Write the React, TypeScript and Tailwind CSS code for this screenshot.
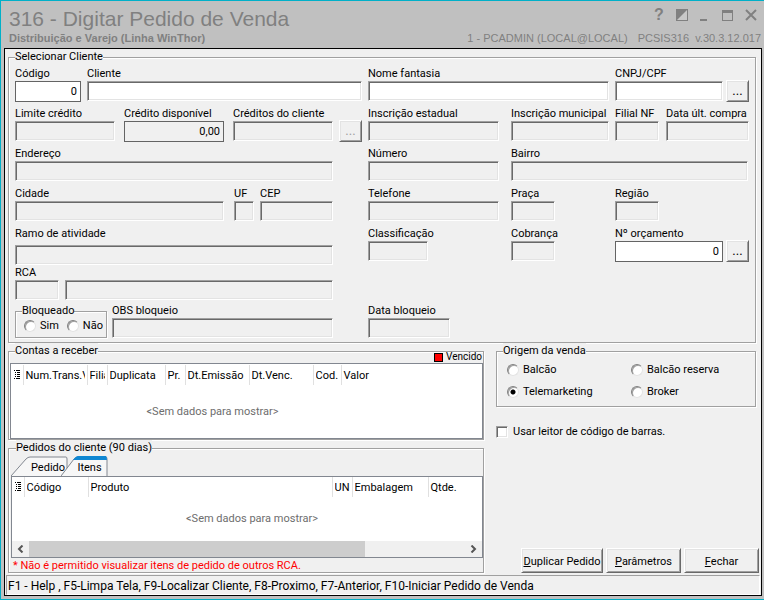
import { useState, type ReactNode } from 'react'

const SUNKEN =
  'border border-t-[#a0a0a0] border-l-[#a0a0a0] border-r-white border-b-white shadow-[inset_1px_1px_0_#696969,inset_-1px_-1px_0_#e3e3e3]'
const RAISED =
  'border border-t-white border-l-white border-r-[#696969] border-b-[#696969] shadow-[inset_1px_1px_0_#e3e3e3,inset_-1px_-1px_0_#a0a0a0]'
const ETCHED = 'border border-[#a0a0a0] shadow-[1px_1px_0_#fff,inset_1px_1px_0_#fff]'

interface FieldProps {
  id: string
  label?: string
  ariaLabel?: string
  value?: string
  variant?: 'readonly' | 'edit' | 'flat' | 'flatReadonly'
  className?: string
  inputClassName?: string
}

function Field({ id, label, ariaLabel, value = '', variant = 'readonly', className = '', inputClassName = '' }: FieldProps) {
  const styles = {
    readonly: `h-5 bg-[#f0f0f0] ${SUNKEN}`,
    edit: `h-5 bg-white ${SUNKEN}`,
    flat: 'h-[21px] bg-white border border-[#646464]',
    flatReadonly: 'h-[21px] bg-[#f0f0f0] border border-[#646464]',
  }
  return (
    <div className={`min-w-0 ${className}`}>
      <label htmlFor={id} className="block h-[15px] leading-4 whitespace-nowrap">
        {label}
      </label>
      <input
        id={id}
        aria-label={ariaLabel}
        defaultValue={value}
        readOnly={variant === 'readonly' || variant === 'flatReadonly'}
        className={`block w-full px-[3px] text-right outline-none ${styles[variant]} ${inputClassName}`}
      />
    </div>
  )
}

function DotsButton({ label, disabled = false }: { label: string; disabled?: boolean }) {
  return (
    <button
      type="button"
      aria-label={label}
      disabled={disabled}
      className={`mt-[14px] h-[22px] w-[23px] shrink-0 bg-[#f0f0f0] text-[13px] leading-5 disabled:text-[#a0a0a0] ${RAISED}`}
    >
      ...
    </button>
  )
}

function Group({ title, className = '', legendClassName = '', children }: {
  title: string
  className?: string
  legendClassName?: string
  children: ReactNode
}) {
  return (
    <fieldset className={`min-w-0 ${ETCHED} ${className}`}>
      <legend className={`bg-[#f0f0f0] leading-4 ${legendClassName}`}>{title}</legend>
      {children}
    </fieldset>
  )
}

function Radio({ name, label, checked, onChange }: {
  name: string
  label: string
  checked: boolean
  onChange: () => void
}) {
  return (
    <label className="flex items-center gap-1 leading-[14px] whitespace-nowrap">
      <input
        type="radio"
        name={name}
        checked={checked}
        onChange={onChange}
        className="size-3 appearance-none rounded-full border border-t-[#808080] border-l-[#808080] border-r-[#e3e3e3] border-b-[#e3e3e3] bg-white shadow-[inset_1px_1px_0_#a0a0a0] checked:bg-[radial-gradient(circle,#000_2px,#fff_3px)]"
      />
      {label}
    </label>
  )
}

function RowsIcon() {
  return (
    <svg width="8" height="10" viewBox="0 0 8 10" className="mx-auto" shapeRendering="crispEdges" aria-hidden="true">
      <path d="M1 0h1v1H1zM3 0h4v1H3zM2 2h1v1H2zM4 2h3v1H4zM2 4h1v1H2zM4 4h3v1H4zM2 6h1v1H2zM4 6h3v1H4zM1 8h1v1H1zM3 8h4v1H3z" fill="#000" />
    </svg>
  )
}

interface Column {
  title: string
  width: number
}

const ACCOUNT_COLUMNS: Column[] = [
  { title: 'Num.Trans.V', width: 64 },
  { title: 'Filial', width: 20 },
  { title: 'Duplicata', width: 58 },
  { title: 'Pr.', width: 20 },
  { title: 'Dt.Emissão', width: 64 },
  { title: 'Dt.Venc.', width: 64 },
  { title: 'Cod.', width: 28 },
]

const ITEM_COLUMNS: Column[] = [
  { title: 'Código', width: 64 },
  { title: 'Produto', width: 244 },
  { title: 'UN', width: 20 },
  { title: 'Embalagem', width: 76 },
]

function DataGrid({ label, columns, last, bodyClassName }: {
  label: string
  columns: Column[]
  last: string
  bodyClassName: string
}) {
  return (
    <table aria-label={label} className="w-full table-fixed border-collapse bg-white">
      <colgroup>
        <col className="w-3" />
        {columns.map((column) => (
          <col key={column.title} style={{ width: column.width }} />
        ))}
        <col />
      </colgroup>
      <thead>
        <tr className="h-5 text-left">
          <th className="border-r border-[#e0e0e0] p-0" aria-label="Linhas">
            <RowsIcon />
          </th>
          {columns.map((column) => (
            <th key={column.title} className="border-r border-[#e0e0e0] p-0 px-[2px] font-normal">
              <div className="overflow-hidden pt-[2px] leading-[18px] whitespace-nowrap">{column.title}</div>
            </th>
          ))}
          <th className="p-0 pt-[2px] pl-[2px] leading-[18px] font-normal">{last}</th>
        </tr>
      </thead>
      <tbody>
        <tr>
          <td colSpan={columns.length + 2} className={`p-0 text-center text-[#6d6d6d] ${bodyClassName}`}>
            &lt;Sem dados para mostrar&gt;
          </td>
        </tr>
      </tbody>
    </table>
  )
}

function TitleBar() {
  return (
    <header className="flex h-[47px] shrink-0 justify-between pr-[3px] pl-2 font-['Liberation_Sans',Arial,sans-serif] text-[#808080]">
      <div>
        <h1 className="mt-[6px] text-[21px] leading-6">316 - Digitar Pedido de Venda</h1>
        <p className="text-[11px] leading-[14px] font-bold">Distribuição e Varejo (Linha WinThor)</p>
      </div>
      <div className="flex flex-col">
        <div className="mt-2 flex h-[22px] justify-end gap-[11px] pr-1">
          <button type="button" aria-label="Ajuda" className="h-3 w-3 text-[16px] leading-3 font-bold">?</button>
          <button type="button" aria-label="Contraste" className="h-3">
            <svg width="12" height="12" viewBox="0 0 12 12">
              <path d="M0 0h12v12H0z" fill="#808080" />
              <path d="M11 1v10H1z" fill="#c8c8c8" />
            </svg>
          </button>
          <button type="button" aria-label="Minimizar" className="h-3">
            <svg width="12" height="12" viewBox="0 0 12 12">
              <path d="M1 10h7v2H1z" fill="#808080" />
            </svg>
          </button>
          <button type="button" aria-label="Maximizar" className="h-3">
            <svg width="12" height="12" viewBox="0 0 12 12" shapeRendering="crispEdges">
              <path d="M0 1h11v11H0zM1 4v7h9V4z" fill="#808080" fillRule="evenodd" />
            </svg>
          </button>
          <button type="button" aria-label="Fechar janela" className="h-3">
            <svg width="12" height="12" viewBox="0 0 12 12">
              <path d="M1 1l10 10M11 1L1 11" stroke="#808080" strokeWidth="2" />
            </svg>
          </button>
        </div>
        <p className="flex gap-[10px] text-[11px] leading-[14px] whitespace-nowrap">
          <span>1 - PCADMIN (LOCAL@LOCAL)</span>
          <span>PCSIS316&nbsp; v.30.3.12.017</span>
        </p>
      </div>
    </header>
  )
}

function CustomerGroup() {
  const [blocked, setBlocked] = useState('')

  return (
    <Group title="Selecionar Cliente" className="px-[6px] pb-1">
      <div className="flex gap-[6px] pt-px">
        {/* address and credit */}
        <div className="flex min-w-0 flex-[347] flex-col">
          <div className="flex h-10 gap-[6px]">
            <Field id="codigo" label="Código" value="0" variant="flat" className="w-[66px]" />
            <Field id="cliente" label="Cliente" variant="edit" className="flex-1" />
          </div>
          <div className="flex h-10">
            <div className="flex flex-1 gap-[9px]">
              <Field id="limite" label="Limite crédito" className="flex-1" />
              <Field id="disponivel" label="Crédito disponível" value="0,00" variant="flatReadonly" className="flex-1" />
              <Field id="creditos" label="Créditos do cliente" className="flex-1" />
            </div>
            <div className="ml-[6px]">
              <DotsButton label="Ver créditos" disabled />
            </div>
          </div>
          <div className="flex flex-col pr-[29px]">
            <Field id="endereco" label="Endereço" className="h-10" />
            <div className="flex h-10">
              <Field id="cidade" label="Cidade" className="flex-1" />
              <Field id="uf" label="UF" className="ml-[10px] w-5" />
              <Field id="cep" label="CEP" className="ml-[6px] w-[73px]" />
            </div>
            <Field id="ramo" label="Ramo de atividade" className="h-[39px]" inputClassName="mt-1" />
            <div className="flex h-[38px] gap-[6px]">
              <Field id="rca" label="RCA" className="w-11" />
              <Field id="rca-nome" ariaLabel="Nome do RCA" className="flex-1" />
            </div>
            <div className="flex gap-[5px]">
              <Group title="Bloqueado" className="h-[35px] w-[92px] pl-[6px]">
                <div className="flex gap-2 pl-[2px]">
                  <Radio name="bloqueado" label="Sim" checked={blocked === 'sim'} onChange={() => setBlocked('sim')} />
                  <Radio name="bloqueado" label="Não" checked={blocked === 'nao'} onChange={() => setBlocked('nao')} />
                </div>
              </Group>
              <Field id="obs" label="OBS bloqueio" className="flex-1" />
            </div>
          </div>
        </div>

        {/* registration */}
        <div className="grid min-w-0 flex-[381] grid-cols-[minmax(0,143fr)_minmax(0,104fr)_minmax(0,134fr)] grid-rows-[40px_40px_40px_40px_77px_35px]">
          <Field id="fantasia" label="Nome fantasia" variant="edit" className="col-span-2 pr-[6px]" />
          <div className="flex gap-[3px]">
            <Field id="cnpj" label="CNPJ/CPF" variant="edit" className="flex-1" />
            <DotsButton label="Pesquisar CNPJ/CPF" />
          </div>
          <Field id="estadual" label="Inscrição estadual" className="pr-3" />
          <Field id="municipal" label="Inscrição municipal" className="pr-[6px]" />
          <div className="flex gap-[7px]">
            <Field id="filial" label="Filial NF" className="w-11" />
            <Field id="compra" label="Data últ. compra" className="flex-1" />
          </div>
          <Field id="numero" label="Número" className="pr-3" />
          <Field id="bairro" label="Bairro" className="col-span-2 pr-px" />
          <Field id="telefone" label="Telefone" className="pr-3" />
          <Field id="praca" label="Praça" className="w-11" />
          <Field id="regiao" label="Região" className="w-11" />
          <Field id="classificacao" label="Classificação" className="w-[60px]" />
          <Field id="cobranca" label="Cobrança" className="w-11" />
          <div className="flex gap-[3px]">
            <Field id="orcamento" label="Nº orçamento" value="0" variant="flat" className="flex-1" />
            <DotsButton label="Pesquisar orçamento" />
          </div>
          <Field id="data-bloqueio" label="Data bloqueio" className="w-[82px]" />
        </div>
      </div>
    </Group>
  )
}

function AccountsGroup() {
  return (
    <Group title="Contas a receber" className="pl-px" legendClassName="ml-[5px]">
      <div className="-mt-[9px] flex h-[13px] items-center justify-end gap-[3px] pt-px pr-px text-[10px] leading-3">
        <span className="size-[9px] border border-black bg-[#ff0000]" />
        Vencido
      </div>
      <div className="h-[76px] overflow-hidden border border-[#828790] bg-white pt-px">
        <DataGrid label="Contas a receber" columns={ACCOUNT_COLUMNS} last="Valor" bodyClassName="h-[54px] pr-[68px]" />
      </div>
    </Group>
  )
}

function OrdersGroup() {
  const [tab, setTab] = useState('itens')

  return (
    <Group title="Pedidos do cliente (90 dias)" className="pl-[2px]" legendClassName="ml-[5px]">
      <div role="tablist" className="grid h-5 w-24 grid-cols-[52px_45px]">
        <button type="button" role="tab" aria-selected={tab === 'pedido'} onClick={() => setTab('pedido')} className="relative pt-1 pl-5 leading-[14px]">
          <svg width="58" height="20" viewBox="0 0 58 20" className="absolute top-0 left-0" aria-hidden="true">
            <path d="M0 20L15 3Q17 1 19 1H55Q56 1 56 3V20" fill="#f7f7f7" stroke="#828790" />
          </svg>
          <span className="relative">Pedido</span>
        </button>
        <button type="button" role="tab" aria-selected={tab === 'itens'} onClick={() => setTab('itens')} className="relative pt-1 pl-2 leading-[14px]">
          <svg width="47" height="20" viewBox="0 0 47 20" className="absolute top-0 right-0" aria-hidden="true">
            <path d="M0 20L13 3Q15 1 17 1H45Q46 1 46 3V20" fill="#f7f7f7" stroke="#828790" />
            <path d="M12 4Q15 0 17 0H45Q46 1 46 4z" fill="#0f87d2" />
          </svg>
          <span className="relative">Itens</span>
        </button>
      </div>
      <div className="overflow-hidden border border-[#828790] bg-white">
        <DataGrid label="Itens do pedido" columns={ITEM_COLUMNS} last="Qtde." bodyClassName="h-11 pl-[10px]" />
        <div className="flex h-4 items-center bg-[#f0f0f0]">
          <button type="button" aria-label="Rolar para a esquerda" className="flex w-[17px] shrink-0 justify-center">
            <svg width="7" height="8" viewBox="0 0 7 8">
              <path d="M5.5 .5L2 4l3.5 3.5" fill="none" stroke="#555" strokeWidth="2" />
            </svg>
          </button>
          <div className="flex h-full flex-1">
            <div className="w-[77%] bg-[#cdcdcd]" />
          </div>
          <button type="button" aria-label="Rolar para a direita" className="flex w-[17px] shrink-0 justify-center">
            <svg width="7" height="8" viewBox="0 0 7 8">
              <path d="M1.5 .5L5 4 1.5 7.5" fill="none" stroke="#555" strokeWidth="2" />
            </svg>
          </button>
        </div>
      </div>
      <p className="h-[14px] pl-[2px] leading-4 text-[#ff0000]">* Não é permitido visualizar itens de pedido de outros RCA.</p>
    </Group>
  )
}

const ORIGINS = ['Balcão', 'Balcão reserva', 'Telemarketing', 'Broker']

function ActionButton({ label, className = '' }: { label: string; className?: string }) {
  return (
    <button type="button" className={`h-[25px] bg-[#f0f0f0] pt-[2px] leading-[14px] whitespace-nowrap ${RAISED} ${className}`}>
      <span className="underline">{label[0]}</span>
      {label.slice(1)}
    </button>
  )
}

export default function App() {
  const [origin, setOrigin] = useState('Telemarketing')

  return (
    <div className="flex min-h-screen flex-col border-y border-l border-[#00b0c8] bg-[#c0c0c0] font-[Roboto,sans-serif] text-[11px] text-black">
      <TitleBar />
      <main className="mr-[2px] mb-[3px] ml-[3px] flex flex-1 flex-col border border-black bg-[#f0f0f0]">
        <div className="pr-[5px] pl-[3px]">
          <CustomerGroup />
        </div>
        <div className="flex gap-3 pr-[2px] pl-[3px]">
          <div className="flex min-w-0 flex-[476] flex-col">
            <AccountsGroup />
            <OrdersGroup />
          </div>
          <div className="flex min-w-0 flex-[263] flex-col">
            <Group title="Origem da venda" className="mr-[3px] h-16 pl-[6px]">
              <div className="grid grid-cols-2 gap-y-2 pt-1 pl-1">
                {ORIGINS.map((item) => (
                  <Radio key={item} name="origem" label={item} checked={origin === item} onChange={() => setOrigin(item)} />
                ))}
              </div>
            </Group>
            <label className="mt-[17px] flex items-center gap-[5px] leading-4 whitespace-nowrap">
              <input type="checkbox" className={`size-3 appearance-none bg-white checked:bg-[#404040] ${SUNKEN}`} />
              Usar leitor de código de barras.
            </label>
            <div className="mt-auto flex justify-end gap-[3px]">
              <ActionButton label="Duplicar Pedido" className="w-[82px]" />
              <ActionButton label="Parâmetros" className="w-[75px]" />
              <ActionButton label="Fechar" className="w-[75px]" />
            </div>
          </div>
        </div>
        <footer className="mt-[2px] mr-px ml-px flex flex-1 items-center border border-t-[#a0a0a0] border-l-[#a0a0a0] border-r-white border-b-white pt-px pl-px text-[12px] leading-[14px]">
          F1 - Help , F5-Limpa Tela, F9-Localizar Cliente, F8-Proximo, F7-Anterior, F10-Iniciar Pedido de Venda
        </footer>
      </main>
    </div>
  )
}
